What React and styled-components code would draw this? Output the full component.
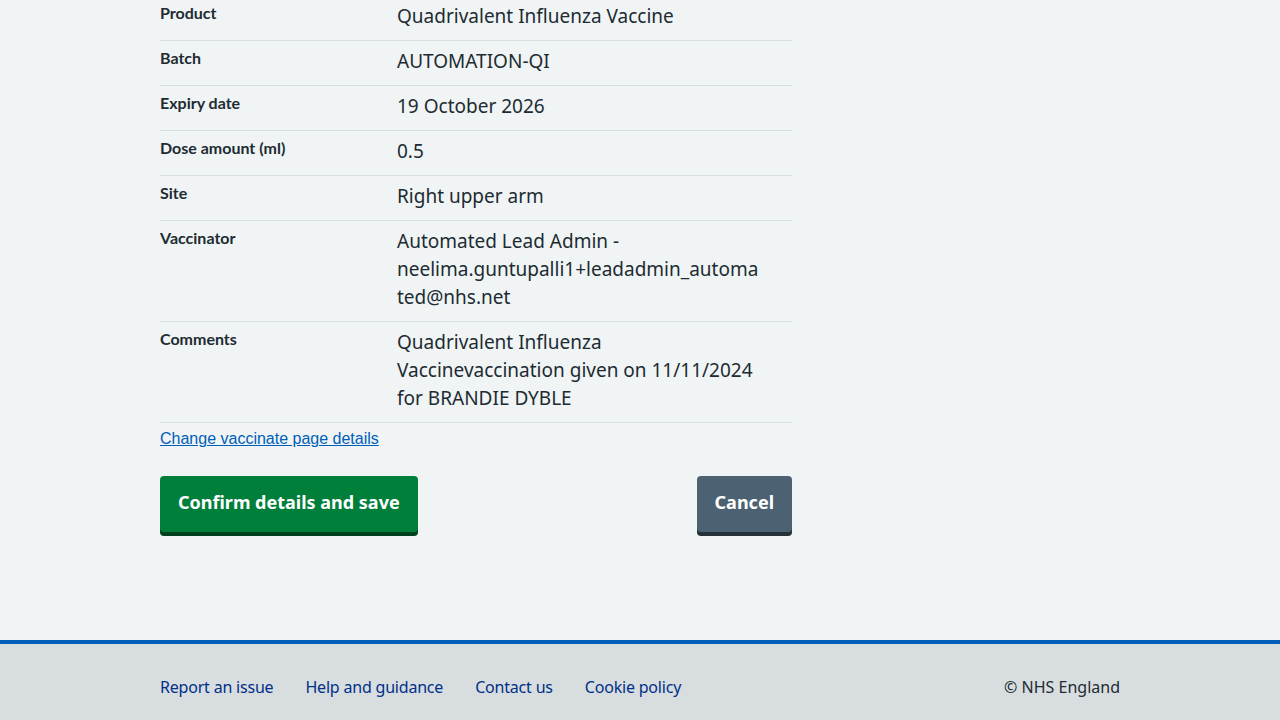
import React from "react";
import styled, { createGlobalStyle } from "styled-components";

const GlobalStyle = createGlobalStyle`
  html, body {
    margin: 0;
    padding: 0;
    background: #f0f4f5;
    color: #212b32;
    font-family: "Noto Sans", "Open Sans", Arial, sans-serif;
  }
  * { box-sizing: border-box; }
`;

const Main = styled.main`
  padding-bottom: 108px;
`;

const Container = styled.div`
  width: 960px;
  margin: 0 auto;
`;

const Column = styled.div`
  width: 632px;
`;

const SummaryList = styled.dl`
  margin: -4px 0 0;
  padding: 0;
`;

const Row = styled.div`
  display: flex;
  border-bottom: 1px solid #d8dde0;
`;

const Key = styled.dt`
  flex: 0 0 237px;
  margin: 0;
  padding: 5px 24px 11px 0;
  font-family: "Lato", "Noto Sans", sans-serif;
  font-weight: 700;
  font-size: 16px;
  line-height: 24px;
  color: #212b32;
`;

const Value = styled.dd`
  flex: 1;
  margin: 0;
  padding: 6px 29px 10px 0;
  font-size: 19px;
  line-height: 28px;
  color: #212b32;
  overflow-wrap: anywhere;
`;

const LinkPara = styled.p`
  margin: 7px 0 0;
  font-family: "Liberation Sans", Arial, sans-serif;
  font-size: 16px;
  line-height: 18px;
`;

const TextLink = styled.a`
  color: #005eb8;
  text-decoration: underline;
  text-underline-offset: 1px;
  cursor: pointer;
`;

const ButtonRow = styled.div`
  display: flex;
  justify-content: space-between;
  align-items: flex-start;
  margin-top: 28px;
`;

const Button = styled.button`
  font-family: "Noto Sans", "Open Sans", sans-serif;
  font-weight: 700;
  font-size: 18px;
  line-height: 28px;
  color: #ffffff;
  background: ${(p) => (p.$variant === "secondary" ? "#4c6272" : "#007f3b")};
  border: 2px solid transparent;
  border-radius: 4px;
  padding: 10px 16px 14px;
  box-shadow: 0 4px 0
    ${(p) => (p.$variant === "secondary" ? "#263139" : "#00401e")};
  cursor: pointer;
`;

const Footer = styled.footer`
  border-top: 4px solid #005eb8;
  background: #d8dde0;
  padding: 31px 0 32px;
`;

const FooterInner = styled.div`
  display: flex;
  justify-content: space-between;
  align-items: flex-start;
`;

const FooterLinks = styled.ul`
  display: flex;
  gap: 32px;
  list-style: none;
  margin: 0;
  padding: 0;
`;

const FooterLink = styled.a`
  font-size: 16px;
  line-height: 24px;
  letter-spacing: -0.2px;
  color: #003087;
  text-decoration: none;
  cursor: pointer;
`;

const Copyright = styled.p`
  margin: 0;
  font-size: 16px;
  line-height: 24px;
  color: #212b32;
`;

const rows = [
  ["Product", "Quadrivalent Influenza Vaccine"],
  ["Batch", "AUTOMATION-QI"],
  ["Expiry date", "19 October 2026"],
  ["Dose amount (ml)", "0.5"],
  ["Site", "Right upper arm"],
  [
    "Vaccinator",
    "Automated Lead Admin - neelima.guntupalli1+leadadmin_automated@nhs.net",
  ],
  [
    "Comments",
    "Quadrivalent Influenza Vaccinevaccination given on 11/11/2024 for BRANDIE DYBLE",
  ],
];

const footerLinks = [
  "Report an issue",
  "Help and guidance",
  "Contact us",
  "Cookie policy",
];

export default function App() {
  return (
    <>
      <GlobalStyle />
      <Main>
        <Container>
          <Column>
            <SummaryList>
              {rows.map(([k, v]) => (
                <Row key={k}>
                  <Key>{k}</Key>
                  <Value>{v}</Value>
                </Row>
              ))}
            </SummaryList>
            <LinkPara>
              <TextLink href="#">Change vaccinate page details</TextLink>
            </LinkPara>
            <ButtonRow>
              <Button>Confirm details and save</Button>
              <Button $variant="secondary">Cancel</Button>
            </ButtonRow>
          </Column>
        </Container>
      </Main>
      <Footer>
        <Container>
          <FooterInner>
            <FooterLinks>
              {footerLinks.map((l) => (
                <li key={l}>
                  <FooterLink href="#">{l}</FooterLink>
                </li>
              ))}
            </FooterLinks>
            <Copyright>© NHS England</Copyright>
          </FooterInner>
        </Container>
      </Footer>
    </>
  );
}
